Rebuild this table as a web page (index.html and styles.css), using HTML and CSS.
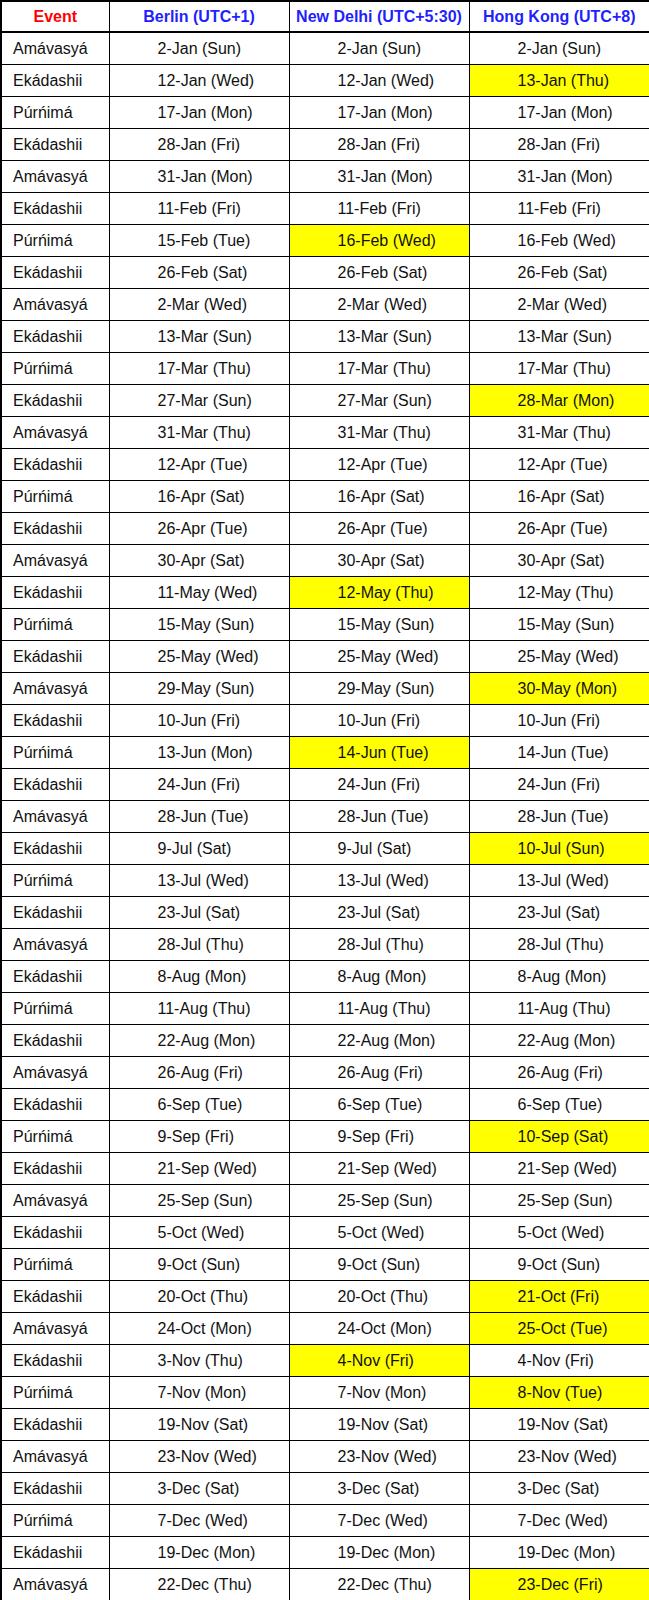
FILE: index.html
```html
<!DOCTYPE html>
<html>
<head>
<meta charset="utf-8">
<link rel="stylesheet" href="styles.css">
</head>
<body>
<table class="cal">
<colgroup><col class="c-ev"><col class="c-d"><col class="c-d"><col class="c-d2"></colgroup>
<thead>
<tr><th class="h-ev">Event</th><th class="h-tz">Berlin (UTC+1)</th><th class="h-tz">New Delhi (UTC+5:30)</th><th class="h-tz">Hong Kong (UTC+8)</th></tr>
</thead>
<tbody>
<tr><td class="ev">Amávasyá</td><td>2-Jan (Sun)</td><td>2-Jan (Sun)</td><td>2-Jan (Sun)</td></tr>
<tr><td class="ev">Ekádashii</td><td>12-Jan (Wed)</td><td>12-Jan (Wed)</td><td class="hl">13-Jan (Thu)</td></tr>
<tr><td class="ev">Púrńimá</td><td>17-Jan (Mon)</td><td>17-Jan (Mon)</td><td>17-Jan (Mon)</td></tr>
<tr><td class="ev">Ekádashii</td><td>28-Jan (Fri)</td><td>28-Jan (Fri)</td><td>28-Jan (Fri)</td></tr>
<tr><td class="ev">Amávasyá</td><td>31-Jan (Mon)</td><td>31-Jan (Mon)</td><td>31-Jan (Mon)</td></tr>
<tr><td class="ev">Ekádashii</td><td>11-Feb (Fri)</td><td>11-Feb (Fri)</td><td>11-Feb (Fri)</td></tr>
<tr><td class="ev">Púrńimá</td><td>15-Feb (Tue)</td><td class="hl">16-Feb (Wed)</td><td>16-Feb (Wed)</td></tr>
<tr><td class="ev">Ekádashii</td><td>26-Feb (Sat)</td><td>26-Feb (Sat)</td><td>26-Feb (Sat)</td></tr>
<tr><td class="ev">Amávasyá</td><td>2-Mar (Wed)</td><td>2-Mar (Wed)</td><td>2-Mar (Wed)</td></tr>
<tr><td class="ev">Ekádashii</td><td>13-Mar (Sun)</td><td>13-Mar (Sun)</td><td>13-Mar (Sun)</td></tr>
<tr><td class="ev">Púrńimá</td><td>17-Mar (Thu)</td><td>17-Mar (Thu)</td><td>17-Mar (Thu)</td></tr>
<tr><td class="ev">Ekádashii</td><td>27-Mar (Sun)</td><td>27-Mar (Sun)</td><td class="hl">28-Mar (Mon)</td></tr>
<tr><td class="ev">Amávasyá</td><td>31-Mar (Thu)</td><td>31-Mar (Thu)</td><td>31-Mar (Thu)</td></tr>
<tr><td class="ev">Ekádashii</td><td>12-Apr (Tue)</td><td>12-Apr (Tue)</td><td>12-Apr (Tue)</td></tr>
<tr><td class="ev">Púrńimá</td><td>16-Apr (Sat)</td><td>16-Apr (Sat)</td><td>16-Apr (Sat)</td></tr>
<tr><td class="ev">Ekádashii</td><td>26-Apr (Tue)</td><td>26-Apr (Tue)</td><td>26-Apr (Tue)</td></tr>
<tr><td class="ev">Amávasyá</td><td>30-Apr (Sat)</td><td>30-Apr (Sat)</td><td>30-Apr (Sat)</td></tr>
<tr><td class="ev">Ekádashii</td><td>11-May (Wed)</td><td class="hl">12-May (Thu)</td><td>12-May (Thu)</td></tr>
<tr><td class="ev">Púrńimá</td><td>15-May (Sun)</td><td>15-May (Sun)</td><td>15-May (Sun)</td></tr>
<tr><td class="ev">Ekádashii</td><td>25-May (Wed)</td><td>25-May (Wed)</td><td>25-May (Wed)</td></tr>
<tr><td class="ev">Amávasyá</td><td>29-May (Sun)</td><td>29-May (Sun)</td><td class="hl">30-May (Mon)</td></tr>
<tr><td class="ev">Ekádashii</td><td>10-Jun (Fri)</td><td>10-Jun (Fri)</td><td>10-Jun (Fri)</td></tr>
<tr><td class="ev">Púrńimá</td><td>13-Jun (Mon)</td><td class="hl">14-Jun (Tue)</td><td>14-Jun (Tue)</td></tr>
<tr><td class="ev">Ekádashii</td><td>24-Jun (Fri)</td><td>24-Jun (Fri)</td><td>24-Jun (Fri)</td></tr>
<tr><td class="ev">Amávasyá</td><td>28-Jun (Tue)</td><td>28-Jun (Tue)</td><td>28-Jun (Tue)</td></tr>
<tr><td class="ev">Ekádashii</td><td>9-Jul (Sat)</td><td>9-Jul (Sat)</td><td class="hl">10-Jul (Sun)</td></tr>
<tr><td class="ev">Púrńimá</td><td>13-Jul (Wed)</td><td>13-Jul (Wed)</td><td>13-Jul (Wed)</td></tr>
<tr><td class="ev">Ekádashii</td><td>23-Jul (Sat)</td><td>23-Jul (Sat)</td><td>23-Jul (Sat)</td></tr>
<tr><td class="ev">Amávasyá</td><td>28-Jul (Thu)</td><td>28-Jul (Thu)</td><td>28-Jul (Thu)</td></tr>
<tr><td class="ev">Ekádashii</td><td>8-Aug (Mon)</td><td>8-Aug (Mon)</td><td>8-Aug (Mon)</td></tr>
<tr><td class="ev">Púrńimá</td><td>11-Aug (Thu)</td><td>11-Aug (Thu)</td><td>11-Aug (Thu)</td></tr>
<tr><td class="ev">Ekádashii</td><td>22-Aug (Mon)</td><td>22-Aug (Mon)</td><td>22-Aug (Mon)</td></tr>
<tr><td class="ev">Amávasyá</td><td>26-Aug (Fri)</td><td>26-Aug (Fri)</td><td>26-Aug (Fri)</td></tr>
<tr><td class="ev">Ekádashii</td><td>6-Sep (Tue)</td><td>6-Sep (Tue)</td><td>6-Sep (Tue)</td></tr>
<tr><td class="ev">Púrńimá</td><td>9-Sep (Fri)</td><td>9-Sep (Fri)</td><td class="hl">10-Sep (Sat)</td></tr>
<tr><td class="ev">Ekádashii</td><td>21-Sep (Wed)</td><td>21-Sep (Wed)</td><td>21-Sep (Wed)</td></tr>
<tr><td class="ev">Amávasyá</td><td>25-Sep (Sun)</td><td>25-Sep (Sun)</td><td>25-Sep (Sun)</td></tr>
<tr><td class="ev">Ekádashii</td><td>5-Oct (Wed)</td><td>5-Oct (Wed)</td><td>5-Oct (Wed)</td></tr>
<tr><td class="ev">Púrńimá</td><td>9-Oct (Sun)</td><td>9-Oct (Sun)</td><td>9-Oct (Sun)</td></tr>
<tr><td class="ev">Ekádashii</td><td>20-Oct (Thu)</td><td>20-Oct (Thu)</td><td class="hl">21-Oct (Fri)</td></tr>
<tr><td class="ev">Amávasyá</td><td>24-Oct (Mon)</td><td>24-Oct (Mon)</td><td class="hl">25-Oct (Tue)</td></tr>
<tr><td class="ev">Ekádashii</td><td>3-Nov (Thu)</td><td class="hl">4-Nov (Fri)</td><td>4-Nov (Fri)</td></tr>
<tr><td class="ev">Púrńimá</td><td>7-Nov (Mon)</td><td>7-Nov (Mon)</td><td class="hl">8-Nov (Tue)</td></tr>
<tr><td class="ev">Ekádashii</td><td>19-Nov (Sat)</td><td>19-Nov (Sat)</td><td>19-Nov (Sat)</td></tr>
<tr><td class="ev">Amávasyá</td><td>23-Nov (Wed)</td><td>23-Nov (Wed)</td><td>23-Nov (Wed)</td></tr>
<tr><td class="ev">Ekádashii</td><td>3-Dec (Sat)</td><td>3-Dec (Sat)</td><td>3-Dec (Sat)</td></tr>
<tr><td class="ev">Púrńimá</td><td>7-Dec (Wed)</td><td>7-Dec (Wed)</td><td>7-Dec (Wed)</td></tr>
<tr><td class="ev">Ekádashii</td><td>19-Dec (Mon)</td><td>19-Dec (Mon)</td><td>19-Dec (Mon)</td></tr>
<tr><td class="ev">Amávasyá</td><td>22-Dec (Thu)</td><td>22-Dec (Thu)</td><td class="hl">23-Dec (Fri)</td></tr>
</tbody>
</table>
</body>
</html>
```
FILE: styles.css
```css
html, body {
  margin: 0;
  padding: 0;
  background: #ffffff;
}
body {
  font-family: "Liberation Sans", Arial, sans-serif;
  font-size: 16px;
  color: #111111;
}
.cal {
  width: 649px;
  border-collapse: collapse;
  table-layout: fixed;
  border: 2px solid #000;
}
.c-ev { width: 108px; }
.c-d { width: 180px; }
.c-d2 { width: 181px; }
.cal th,
.cal td {
  border: 1px solid #000;
  padding: 0;
  vertical-align: middle;
  white-space: nowrap;
  overflow: hidden;
}
.cal th {
  height: 29px;
  font-weight: bold;
  text-align: center;
  border-bottom: 2px solid #000;
}
.h-ev { color: #ff0000; }
.h-tz { color: #1f1fff; }
.cal td {
  height: 31px;
  text-align: left;
  padding-left: 48px;
  line-height: 18px;
}
.cal td.ev {
  padding-left: 11px;
}
.cal td.hl {
  background: #ffff00;
}
```
